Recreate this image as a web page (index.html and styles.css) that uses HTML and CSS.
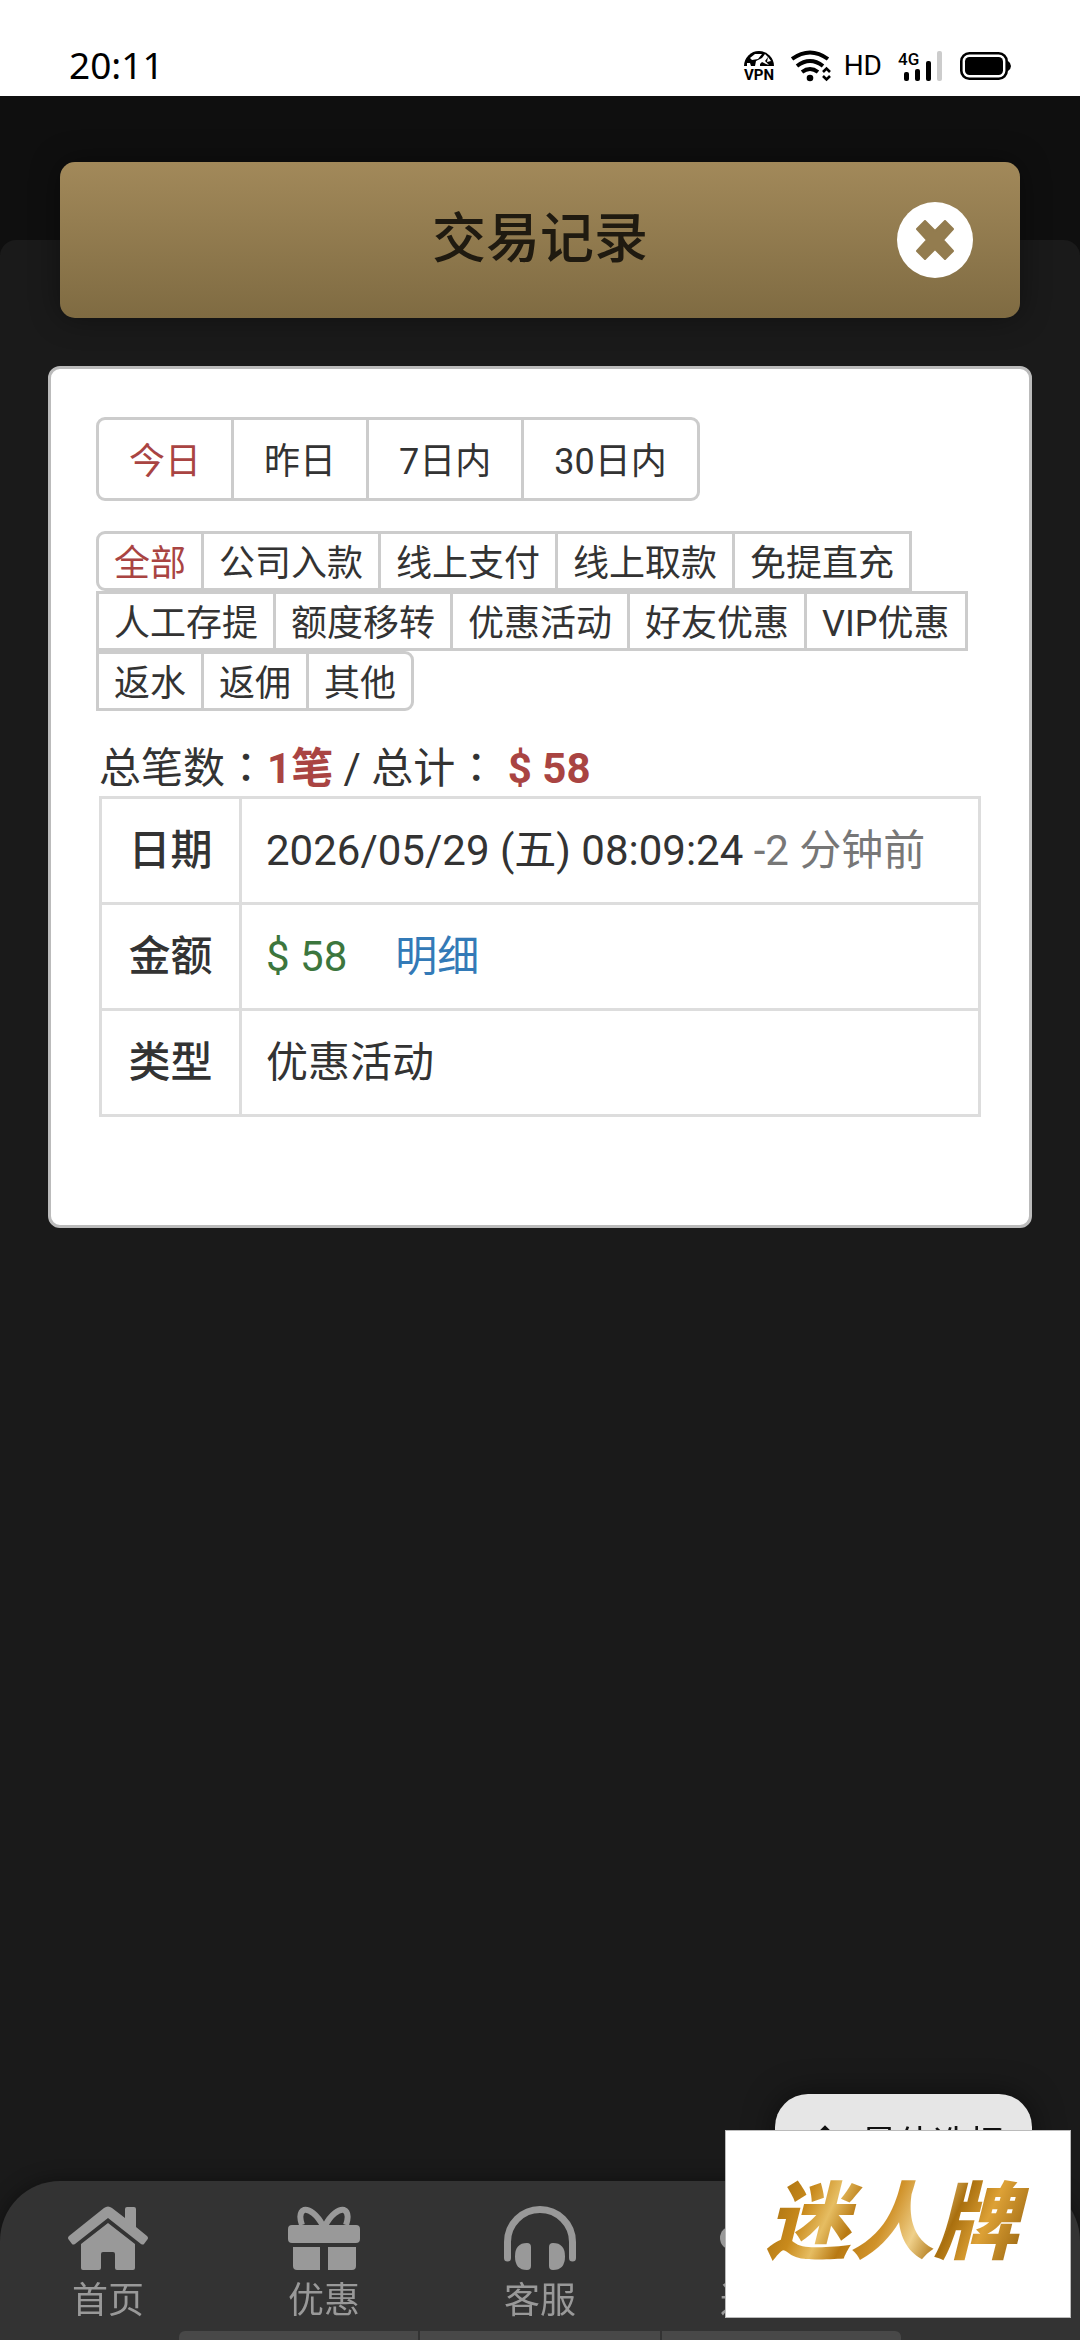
FILE: index.html
```html
<!DOCTYPE html>
<html lang="zh-CN">
<head>
<meta charset="utf-8">
<meta name="viewport" content="width=device-width, initial-scale=1">
<title>交易记录</title>
<link rel="stylesheet" href="styles.css">
</head>
<body>
<div class="app">
  <header class="status">
    <time class="clock">20:11</time>
    <div class="status-icons">
      <svg width="32" height="32" viewBox="0 0 32 32" aria-hidden="true">
        <path d="M1 16a15 15 0 0 1 30 0z"/>
        <path d="M7 8l5-4 7 0-4 5-6 1zM12 16l1-5 6-3 3-4 3 3-3 4 4 4-3-1-4-2-2 2v2zM4 13l3 0 1 3H4zM25 7l3 4-4 1z" fill="#fff"/>
        <text x="16" y="30" class="vpn" text-anchor="middle">VPN</text>
      </svg>
      <svg class="wifi" width="40" height="32" viewBox="0 0 40 32" aria-hidden="true">
        <g fill="none" stroke="#000" stroke-width="4">
          <path d="M1 9Q19 -4 37 9"/>
          <path d="M6 16Q19 6 32 16"/>
          <path d="M11 22Q19 16 27 22"/>
          <path d="M32 22l3.500-3.500 3.500 3.500M32 26l3.500 3.500 3.500-3.500" stroke-width="2.600"/>
        </g>
        <circle cx="19" cy="28" r="3.300"/>
      </svg>
      <span class="hd">HD</span>
      <svg class="signal" width="44" height="32" viewBox="0 0 44 32" aria-hidden="true">
        <text x="0" y="15" class="gen">4G</text>
        <rect x="6" y="22" width="5" height="9" rx="2"/>
        <rect x="17" y="19" width="5" height="12" rx="2"/>
        <rect x="28" y="11" width="5" height="20" rx="2"/>
        <rect x="39" y="1" width="5" height="30" rx="2" fill="#ccc"/>
      </svg>
      <svg class="battery" width="51" height="28" viewBox="0 0 51 28" aria-hidden="true">
        <rect x="1.300" y="1.300" width="45.400" height="25.400" rx="8" fill="none" stroke="#000" stroke-width="2.600"/>
        <rect x="5" y="5" width="38" height="18" rx="4.500"/>
        <path d="M48 9q3 2 3 5t-3 5z"/>
      </svg>
    </div>
  </header>

  <main class="page">
    <div class="titlebar">
      <h1>交易记录</h1>
      <button class="close" type="button" aria-label="关闭">
        <svg width="38" height="40" viewBox="0 0 38 40"><path d="M9 1L19 11 29 1 37 9 27 20 37 31 29 39 19 29 9 39 1 31 11 20 1 9z" stroke-linejoin="round"/></svg>
      </button>
    </div>

    <section class="card">
      <div class="ranges">
        <button type="button" class="active">今日</button>
        <button type="button">昨日</button>
        <button type="button">7日内</button>
        <button type="button">30日内</button>
      </div>
      <div class="kinds">
        <button type="button" class="active">全部</button>
        <button type="button">公司入款</button>
        <button type="button">线上支付</button>
        <button type="button">线上取款</button>
        <button type="button">免提直充</button>
        <button type="button">人工存提</button>
        <button type="button">额度移转</button>
        <button type="button">优惠活动</button>
        <button type="button">好友优惠</button>
        <button type="button">VIP优惠</button>
        <button type="button">返水</button>
        <button type="button">返佣</button>
        <button type="button">其他</button>
      </div>
      <p class="summary">总笔数<span class="colon" lang="zh-TW">：</span><b>1笔</b> / 总计<span class="colon" lang="zh-TW">：</span> <b>$ 58</b></p>
      <table class="record">
        <tbody>
          <tr><th scope="row">日期</th><td>2026/05/29 (五) 08:09:24 <span class="ago">-2 分钟前</span></td></tr>
          <tr><th scope="row">金额</th><td><span class="amount">$ 58</span><a class="detail" href="#">明细</a></td></tr>
          <tr><th scope="row">类型</th><td>优惠活动</td></tr>
        </tbody>
      </table>
    </section>
  </main>

  <footer class="dock">
    <button class="best" type="button">
      <svg width="32" height="32" viewBox="0 0 32 32" fill="none" stroke="#111" stroke-width="4"><path d="M4 15L16 3l12 12M16 4v26"/></svg>
      最佳选择
    </button>
    <nav class="tabs">
      <a href="#">
        <svg width="82" height="64" viewBox="0 0 82 64"><path d="M37 2q4-3 8 0L58 12V3q0-2 2-2h7q2 0 2 2v18l11 9q2 2 0 4l-3 4q-1 1-3 0L41 12 8 38q-2 1-3 0l-3-4q-2-2 0-4z"/><path d="M41 17L68 38v24q0 2-2 2H50q-2 0-2-2V48q0-2-2-2H36q-2 0-2 2v14q0 2-2 2H16q-2 0-2-2V38z"/></svg>
        首页
      </a>
      <a href="#">
        <svg width="72" height="64" viewBox="0 0 72 64"><path d="M4 19h64q4 0 4 4v10q0 4-4 4H4q-4 0-4-4V23q0-4 4-4zM5 41h27v23H9q-4 0-4-4zM40 41h28v19q0 4-4 4H40z"/><path d="M35 20C29 8 21 3 16 4 11 6 12 14 14 19M37 20C43 8 51 3 56 4 61 6 60 14 58 19" fill="none" stroke="#999" stroke-width="6"/></svg>
        优惠
      </a>
      <a href="#">
        <svg width="72" height="64" viewBox="0 0 72 64"><path d="M3.500 52V36a32.500 32.500 0 0 1 65 0v16" fill="none" stroke="#999" stroke-width="7" stroke-linecap="round"/><path d="M23 37q4 0 4 4v19q0 4-4 4-12 0-12-13.500T23 37zM49 37q-4 0-4 4v19q0 4 4 4 12 0 12-13.500T49 37z"/></svg>
        客服
      </a>
      <a href="#">
        <svg width="72" height="64" viewBox="0 0 72 64"><circle cx="12" cy="32" r="12"/><circle cx="56" cy="12" r="12"/><circle cx="56" cy="52" r="12"/><path d="M12 32L56 12M12 32l44 20" stroke="#999" stroke-width="6"/></svg>
        返佣
      </a>
      <a href="#" aria-label="我的"></a>
    </nav>
    <div class="strip"><span></span><span></span><span></span></div>
    <div class="promo"><strong>迷人牌</strong></div>
  </footer>
</div>
</body>
</html>
```
FILE: styles.css
```css
* { box-sizing: border-box; }

body {
  margin: 0;
  background: #0f0f0f;
  color: #333;
  font-family: Roboto, "Noto Sans CJK SC", sans-serif;
  font-size: 42px;
}

button {
  margin: 0;
  padding: 0;
  border: 0;
  background: none;
  color: inherit;
  font: inherit;
}

svg { display: block; flex: none; }

.app {
  display: flex;
  flex-direction: column;
  min-height: 100vh;
}

/* Status bar */
.status {
  display: flex;
  justify-content: space-between;
  height: 96px;
  padding: 50px 69px 0;
  background: #fff;
  color: #000;
}

.clock {
  font: 37px/30px "Noto Sans", sans-serif;
}

.status-icons {
  display: flex;
  align-items: center;
  height: 32px;
}

.wifi { margin-left: 16px; }

.hd {
  margin-left: 13px;
  font-size: 28px;
  line-height: 32px;
}

.signal { margin-left: 16px; }
.battery { margin-left: 18px; }

.vpn { font: bold 15px Roboto, sans-serif; }
.gen { font: 500 17px Roboto, sans-serif; }

/* Page */
.page {
  position: relative;
  z-index: 0;
  flex: 1;
  padding: 66px 48px 0;
}

.page::before {
  content: "";
  position: absolute;
  z-index: -1;
  inset: 144px 0 0;
  border-radius: 16px 16px 0 0;
  background: #1a1a1a;
}

.titlebar {
  display: grid;
  grid-template-columns: 1fr auto 1fr;
  align-items: center;
  height: 156px;
  margin: 0 12px;
  padding: 0 47px;
  border-radius: 15px;
  background: linear-gradient(#a2895a, #7f6b42);
  box-shadow: 0 0 30px rgba(0, 0, 0, 0.4);
}

.titlebar h1 {
  grid-column: 2;
  margin: 0;
  color: #1f1a10;
  font-size: 54px;
  font-weight: 500;
  line-height: 72px;
}

.close {
  display: flex;
  align-items: center;
  justify-content: center;
  justify-self: end;
  width: 76px;
  height: 76px;
  border-radius: 50%;
  background: #fff;
}

.close path { fill: #937c4f; stroke: #937c4f; stroke-width: 2; }

.card {
  margin-top: 48px;
  padding: 48px 45px 108px;
  border: 3px solid #bbb;
  border-radius: 12px;
  background: #fff;
}

/* Filter buttons */
.ranges, .kinds {
  display: flex;
  flex-wrap: wrap;
  font-size: 36px;
}

.ranges button, .kinds button {
  margin-right: -3px;
  padding-bottom: 2px;
  border: 3px solid #ccc;
  background: #fff;
}

.ranges button { height: 84px; padding-inline: 30px; }
.kinds button { height: 60px; padding-inline: 15px; }
.kinds { margin-top: 30px; }

.ranges button:first-child, .kinds button:first-child { border-radius: 9px 0 0 9px; }
.ranges button:last-child, .kinds button:last-child { border-radius: 0 9px 9px 0; }
.ranges .active, .kinds .active { color: #a94442; }

/* Record */
.summary {
  margin: 31px 3px 0;
  line-height: 54px;
}

.summary b { color: #a94442; }

.colon {
  font-family: "Noto Sans CJK TC", sans-serif;
  line-height: 36px;
}

.record {
  width: calc(100% - 6px);
  margin: 0 3px;
  border-collapse: separate;
  border-spacing: 0;
  border: 3px solid #ddd;
  line-height: 60px;
}

.record th, .record td {
  height: 106px;
  padding: 0 24px;
  border-bottom: 3px solid #ddd;
  text-align: left;
}

.record th {
  width: 140px;
  border-right: 3px solid #ddd;
  text-align: center;
  font-weight: 500;
}

.record tr:last-child > * { height: 103px; border-bottom: 0; }
.ago { color: #777; }
.amount { color: #3c763d; }

.detail {
  margin-left: 48px;
  color: #337ab7;
  text-decoration: none;
}

/* Bottom dock */
.dock {
  position: fixed;
  inset: auto 0 0;
}

.best {
  display: flex;
  align-items: center;
  gap: 20px;
  height: 87px;
  margin: 0 48px 0 auto;
  padding: 6px 27px 0 34px;
  border-radius: 33px 33px 0 0;
  background: #e6e6e6;
  color: #111;
  font-size: 36px;
  box-shadow: 0 0 30px rgba(0, 0, 0, 0.5);
}

.tabs {
  position: relative;
  display: grid;
  grid-template-columns: repeat(5, 1fr);
  height: 159px;
  padding-top: 25px;
  border-radius: 60px 60px 0 0;
  background: #333;
  box-shadow: 0 0 20px rgba(0, 0, 0, 0.4);
}

.tabs a {
  display: flex;
  flex-direction: column;
  align-items: center;
  gap: 5px;
  color: #999;
  font-size: 36px;
  line-height: 52px;
  text-decoration: none;
}

.tabs svg { fill: #999; }

.strip {
  position: absolute;
  inset: auto 179px 0;
  display: grid;
  grid-template-columns: repeat(3, 1fr);
  gap: 2px;
  height: 9px;
  overflow: hidden;
  border-radius: 6px 6px 0 0;
}

.strip span { background: #484848; }

.promo {
  position: absolute;
  right: 9px;
  bottom: 22px;
  display: flex;
  align-items: center;
  justify-content: center;
  width: 346px;
  height: 188px;
  border: 1px solid #bbb;
  background: #fff;
}

.promo strong {
  padding: 0 20px 0 8px;
  background: linear-gradient(115deg, #a8700f 8%, #c98a1c 20%, #e6bd62 28%, #b87912 36%, #d0922a 46%, #efd08a 56%, #a96f0e 66%, #dda136 76%, #8f5c0a 94%);
  background-clip: text;
  -webkit-background-clip: text;
  color: transparent;
  font-size: 84px;
  font-style: italic;
  font-weight: 900;
  line-height: 120px;
}
```
